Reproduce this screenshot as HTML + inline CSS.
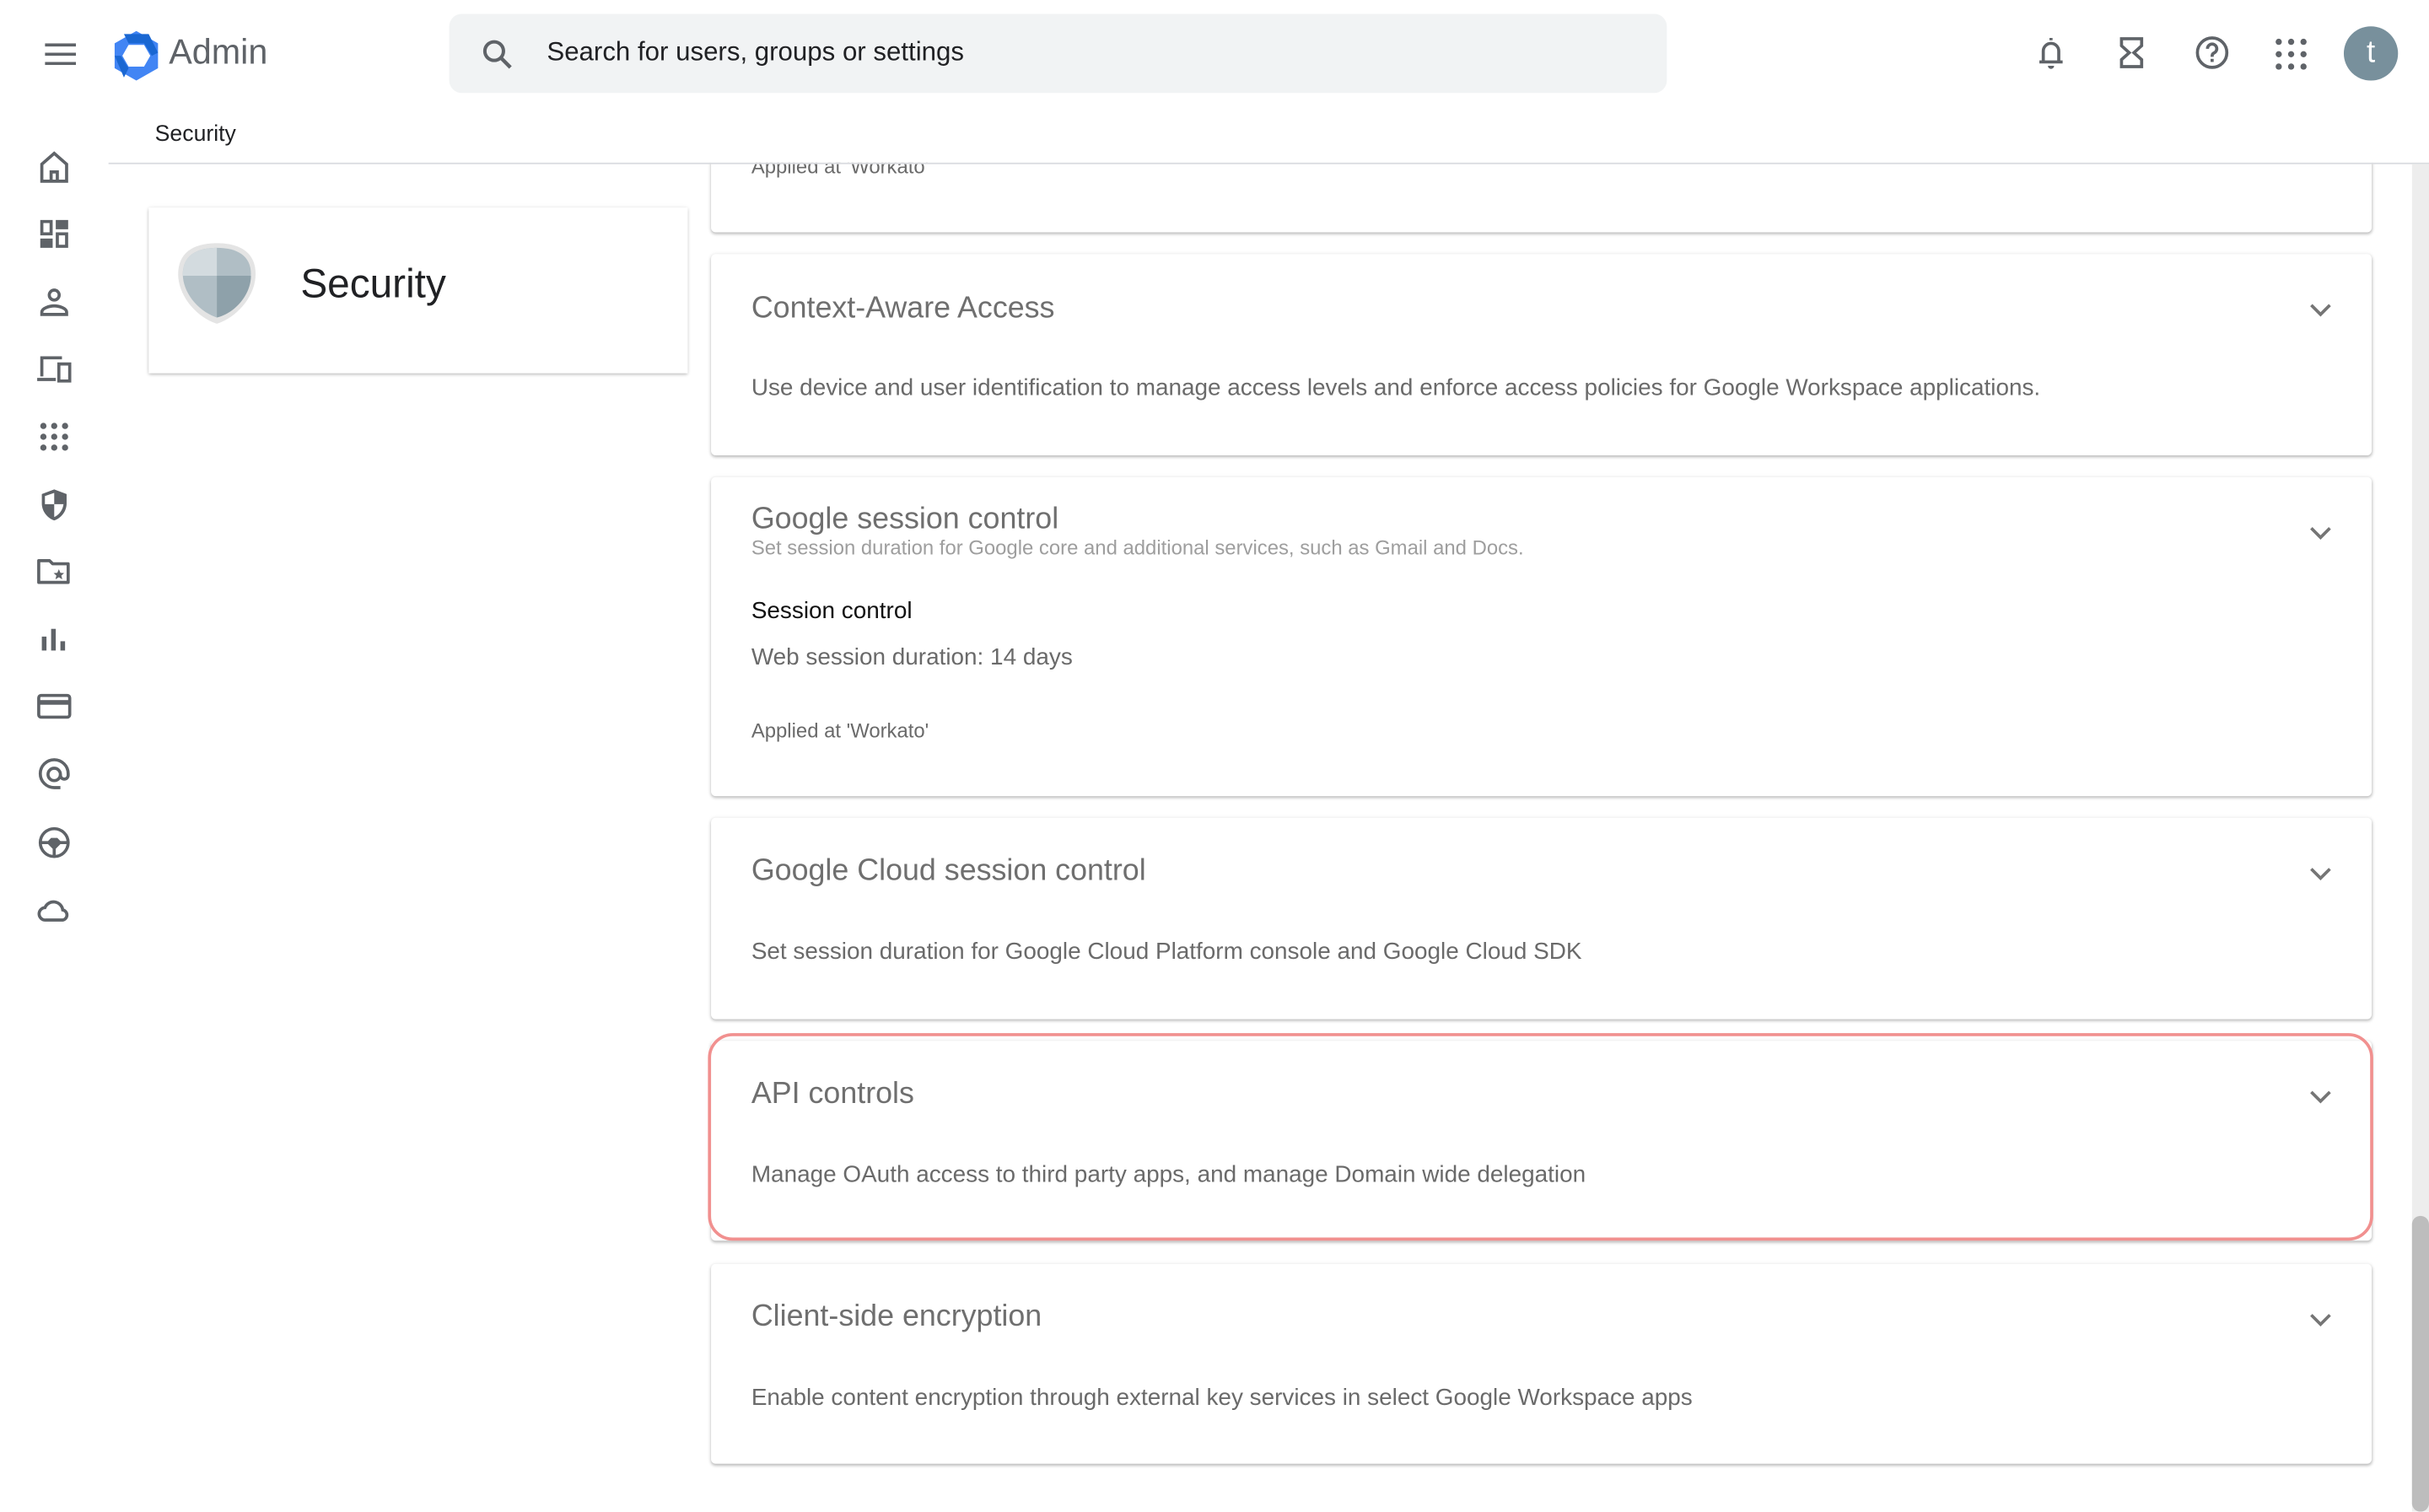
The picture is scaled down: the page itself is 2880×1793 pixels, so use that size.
<!DOCTYPE html>
<html><head><meta charset="utf-8"><style>
html,body{margin:0;padding:0;width:2880px;height:1792px;overflow:hidden;background:#fff}
#w{position:absolute;left:0;top:0;width:1568px;height:976px;transform:scale(1.836735);transform-origin:0 0;font-family:"Liberation Sans",Arial,sans-serif;background:#fff;overflow:hidden}
.a{position:absolute}
.card{position:absolute;left:459px;width:1072px;background:#fff;border-radius:3px;box-shadow:0 1px 2px rgba(0,0,0,.25),0 0 3px rgba(0,0,0,.06)}
.t{position:absolute;left:26px;font-size:19.5px;color:#6f6f6f;white-space:nowrap}
.d{position:absolute;left:26px;font-size:15.2px;color:#6a6a6a;white-space:nowrap}
.chev{position:absolute;left:1032px;width:14px;height:10px}
.ic{position:absolute;left:23px;width:24px;height:24px}
</style></head><body><div id="w">

<!-- cards -->
<div class="card" style="top:60px;height:90px"><div class="d" style="top:40px;font-size:13px">Applied at 'Workato'</div></div>
<div class="card" style="top:164px;height:130px">
 <div class="t" style="top:24px">Context-Aware Access</div>
 <div class="d" style="top:78px">Use device and user identification to manage access levels and enforce access policies for Google Workspace applications.</div>
 <svg class="chev" style="top:31px" viewBox="0 0 14 10"><path d="M1 2l6 6 6-6" fill="none" stroke="#757575" stroke-width="2"/></svg></div>
<div class="card" style="top:308px;height:206px">
 <div class="t" style="top:16px">Google session control</div>
 <div class="d" style="top:38px;font-size:13px;color:#9e9e9e">Set session duration for Google core and additional services, such as Gmail and Docs.</div>
 <div class="d" style="top:78px;color:#111">Session control</div>
 <div class="d" style="top:108px">Web session duration: 14 days</div>
 <div class="d" style="top:156px;font-size:13px">Applied at 'Workato'</div>
 <svg class="chev" style="top:31px" viewBox="0 0 14 10"><path d="M1 2l6 6 6-6" fill="none" stroke="#757575" stroke-width="2"/></svg></div>
<div class="card" style="top:528px;height:130px">
 <div class="t" style="top:23px">Google Cloud session control</div>
 <div class="d" style="top:78px">Set session duration for Google Cloud Platform console and Google Cloud SDK</div>
 <svg class="chev" style="top:31px" viewBox="0 0 14 10"><path d="M1 2l6 6 6-6" fill="none" stroke="#757575" stroke-width="2"/></svg></div>
<div class="card" style="top:672px;height:129px">
 <div class="t" style="top:23px">API controls</div>
 <div class="d" style="top:78px">Manage OAuth access to third party apps, and manage Domain wide delegation</div>
 <svg class="chev" style="top:31px" viewBox="0 0 14 10"><path d="M1 2l6 6 6-6" fill="none" stroke="#757575" stroke-width="2"/></svg></div>
<div class="a" style="left:457px;top:667px;width:1071px;height:130px;border:2.5px solid #f1908f;border-radius:16px"></div>
<div class="card" style="top:816px;height:129px">
 <div class="t" style="top:23px">Client-side encryption</div>
 <div class="d" style="top:78px">Enable content encryption through external key services in select Google Workspace apps</div>
 <svg class="chev" style="top:31px" viewBox="0 0 14 10"><path d="M1 2l6 6 6-6" fill="none" stroke="#757575" stroke-width="2"/></svg></div>

<!-- header cover -->
<div class="a" style="left:0;top:0;width:1568px;height:105px;background:#fff"></div>
<div class="a" style="left:70px;top:105px;width:1498px;height:1px;background:#dadce0"></div>
<div class="a" style="left:0;top:70px;width:70px;height:906px;background:#fff"></div>

<!-- top bar -->
<svg class="a" style="left:29px;top:28px" width="20" height="14" viewBox="0 0 20 14"><path d="M0 1h20M0 7h20M0 13h20" stroke="#5f6368" stroke-width="2"/></svg>
<svg class="a" style="left:72px;top:20px" width="32" height="32" viewBox="0 0 32 32"><polygon points="16,0 30,8 30,24 16,32 2,24 2,8" fill="#4285f4"/><polygon points="8,2 24,2 30,14 26,16 21,8 11,8" fill="#1a67d2"/><polygon points="2,16 6,16 11,24 8,30" fill="#1a67d2"/><polygon points="11,9 21,9 25,16 21,23 11,23 7,16" fill="#fff"/></svg>
<div class="a" style="left:109px;top:21px;font-size:22.5px;color:#5f6368">Admin</div>
<div class="a" style="left:290px;top:9px;width:786px;height:51px;background:#f1f3f4;border-radius:8px"></div>
<svg class="a" style="left:309px;top:23px" width="24" height="24" viewBox="0 0 24 24"><circle cx="10" cy="10" r="6" fill="none" stroke="#5f6368" stroke-width="2.2"/><path d="M14.5 14.5l6 6" stroke="#5f6368" stroke-width="2.4"/></svg>
<div class="a" style="left:353px;top:24px;font-size:17px;color:#202124">Search for users, groups or settings</div>
<svg class="a" style="left:1312px;top:22px" width="24" height="24" viewBox="0 0 24 24"><path d="M12 2.5v1.5M7 18V11a5 5 0 0 1 10 0v7M4.5 18h15" fill="none" stroke="#5f6368" stroke-width="2"/><path d="M10 20.5h4a2 2 0 0 1-4 0z" fill="#5f6368"/></svg>
<svg class="a" style="left:1364px;top:22px" width="24" height="24" viewBox="0 0 24 24"><path d="M5.5 3h13v4.5L13.5 12l5 4.5V21h-13v-4.5l5-4.5-5-4.5z" fill="none" stroke="#5f6368" stroke-width="2"/></svg>
<svg class="a" style="left:1416px;top:22px" width="24" height="24" viewBox="0 0 24 24"><circle cx="12" cy="12" r="9.5" fill="none" stroke="#5f6368" stroke-width="2"/><path d="M9 9.5a3 3 0 1 1 4.2 2.7c-.8.4-1.2 1-1.2 2v.5" fill="none" stroke="#5f6368" stroke-width="2"/><rect x="11" y="16" width="2" height="2" fill="#5f6368"/></svg>
<svg class="a" style="left:1467px;top:23px" width="24" height="24" viewBox="0 0 24 24" fill="#5f6368"><circle cx="4" cy="4" r="2"/><circle cx="12" cy="4" r="2"/><circle cx="20" cy="4" r="2"/><circle cx="4" cy="12" r="2"/><circle cx="12" cy="12" r="2"/><circle cx="20" cy="12" r="2"/><circle cx="4" cy="20" r="2"/><circle cx="12" cy="20" r="2"/><circle cx="20" cy="20" r="2"/></svg>
<div class="a" style="left:1513px;top:17px;width:35px;height:35px;border-radius:50%;background:#78909c;color:#fff;font-size:20px;text-align:center;line-height:35px">t</div>
<div class="a" style="left:100px;top:79px;font-size:14.5px;color:#202124">Security</div>

<!-- left rail -->
<svg class="ic" style="top:96px" viewBox="0 0 24 24"><path d="M4 21V10l8-7 8 7v11zM10 21v-6h4v6" fill="none" stroke="#5f6368" stroke-width="2"/></svg>
<svg class="ic" style="top:139px" viewBox="0 0 24 24" fill="#5f6368"><path d="M3 3h8v10H3zM13 3h8v6h-8zM3 15h8v6H3zM13 11h8v10h-8z"/><path d="M5 5h4v6H5zM15 13h4v6h-4z" fill="#fff"/></svg>
<svg class="ic" style="top:183px" viewBox="0 0 24 24"><circle cx="12" cy="7.5" r="3.2" fill="none" stroke="#5f6368" stroke-width="2"/><path d="M4 20v-1.5c0-2.5 5-4 8-4s8 1.5 8 4V20z" fill="none" stroke="#5f6368" stroke-width="2"/></svg>
<svg class="ic" style="top:226px" viewBox="0 0 24 24"><path d="M4 17V5h13M1 19h12M15 9h7v11h-7z" fill="none" stroke="#5f6368" stroke-width="2"/></svg>
<svg class="ic" style="top:270px" viewBox="0 0 24 24" fill="#5f6368"><circle cx="5" cy="5" r="2"/><circle cx="12" cy="5" r="2"/><circle cx="19" cy="5" r="2"/><circle cx="5" cy="12" r="2"/><circle cx="12" cy="12" r="2"/><circle cx="19" cy="12" r="2"/><circle cx="5" cy="19" r="2"/><circle cx="12" cy="19" r="2"/><circle cx="19" cy="19" r="2"/></svg>
<svg class="ic" style="top:314px" viewBox="0 0 24 24"><path d="M12 2l8 3v6c0 5-3.5 9.5-8 11-4.5-1.5-8-6-8-11V5z" fill="#5f6368"/><path d="M12 4.2v7.3H6V6.3zM12 11.5h6c-.4 3.8-3 7-6 8.3z" fill="#fff"/></svg>
<svg class="ic" style="top:357px" viewBox="0 0 24 24"><path d="M2 5h7l2 2h10v12H2z" fill="none" stroke="#5f6368" stroke-width="2" stroke-linejoin="round"/><path d="M15 10.5l1 2.3 2.4.2-1.8 1.6.6 2.4-2.2-1.3-2.2 1.3.6-2.4-1.8-1.6 2.4-.2z" fill="#5f6368"/></svg>
<svg class="ic" style="top:401px" viewBox="0 0 24 24" fill="#5f6368"><rect x="4" y="10" width="3" height="9"/><rect x="10" y="5" width="3" height="14"/><rect x="16" y="13" width="3" height="6"/></svg>
<svg class="ic" style="top:444px" viewBox="0 0 24 24"><rect x="2" y="5" width="20" height="14" rx="1.5" fill="none" stroke="#5f6368" stroke-width="2"/><rect x="2" y="8" width="20" height="3" fill="#5f6368"/></svg>
<svg class="ic" style="top:488px" viewBox="0 0 24 24"><path d="M16 20.5h-4a9 9 0 1 1 9-9v1a2.5 2.5 0 0 1-5 0V12" fill="none" stroke="#5f6368" stroke-width="2"/><circle cx="12" cy="12" r="4" fill="none" stroke="#5f6368" stroke-width="2"/></svg>
<svg class="ic" style="top:532px" viewBox="0 0 24 24"><circle cx="12" cy="12" r="9" fill="none" stroke="#5f6368" stroke-width="2"/><path d="M3 11h5l2-2h4l2 2h5v2h-5l-3 3v5h-2v-5l-3-3H3z" fill="#5f6368"/></svg>
<svg class="ic" style="top:575px" viewBox="0 0 24 24"><path d="M6.5 19a4 4 0 0 1-.5-8 6 6 0 0 1 11.5 1.5 3.3 3.3 0 0 1 0 6.5z" fill="none" stroke="#5f6368" stroke-width="2"/></svg>

<!-- security card -->
<div class="a" style="left:96px;top:134px;width:348px;height:107px;background:#fff;box-shadow:0 1px 2px rgba(0,0,0,.25),0 0 3px rgba(0,0,0,.06)"></div>
<svg class="a" style="left:113px;top:155px" width="54" height="56" viewBox="0 0 54 56"><path d="M27 2C12 2 2 8 2 22c0 14 12 28 25 32 13-4 25-18 25-32C52 8 42 2 27 2z" fill="#e4e4e4"/><path d="M27 5C14 5 5 10 5 22c0 12 10 24 22 28 12-4 22-16 22-28C49 10 40 5 27 5z" fill="#b0bec5"/><path d="M27 5C14 5 5 10 5 22v1h22z" fill="#d3dbdf"/><path d="M27 23h22c0 12-10 24-22 27z" fill="#8ea1aa"/></svg>
<div class="a" style="left:194px;top:168px;font-size:26px;color:#202124">Security</div>

<!-- scrollbar -->
<div class="a" style="left:1557px;top:106px;width:11px;height:870px;background:#ededed"></div>
<div class="a" style="left:1557px;top:785px;width:11px;height:191px;background:#bdbdbd;border-radius:6px"></div>
</div></body></html>
